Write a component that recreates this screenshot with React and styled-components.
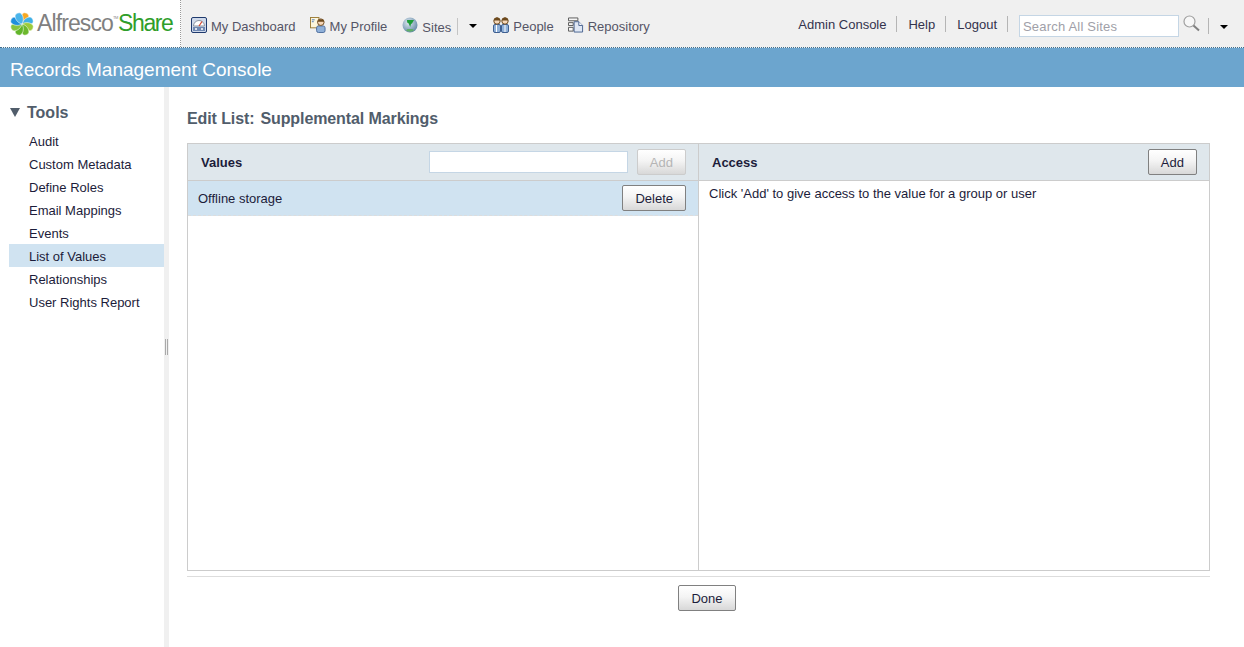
import styled, { createGlobalStyle } from "styled-components";

const GlobalStyle = createGlobalStyle`
  html, body {
    margin: 0;
    padding: 0;
    background: #fff;
    font-family: "Liberation Sans", Arial, sans-serif;
    font-size: 13px;
    color: #1c1c3a;
  }
`;

const tools = [
  "Audit",
  "Custom Metadata",
  "Define Roles",
  "Email Mappings",
  "Events",
  "List of Values",
  "Relationships",
  "User Rights Report",
];

const petals = [
  { a: 22, c: "#f7a823" },
  { a: 67, c: "#3fb0e6" },
  { a: 112, c: "#9ccb3b" },
  { a: 157, c: "#6cb82c" },
  { a: 202, c: "#62b52a" },
  { a: 247, c: "#86c440" },
  { a: 292, c: "#1f8fdc" },
  { a: 337, c: "#4ab4ea" },
];

function LogoIcon() {
  return (
    <svg width="26" height="26" viewBox="0 0 26 26">
      {petals.map((p) => (
        <path
          key={p.a}
          d="M13 13C9 10 8.500 5 10 2.500C11 .8 15 .8 16 2.500C17.500 5 17 10 13 13z"
          fill={p.c}
          stroke="#fff"
          strokeWidth="0.5"
          transform={`rotate(${p.a} 13 13)`}
        />
      ))}
    </svg>
  );
}

function DashboardIcon() {
  return (
    <svg width="16" height="16" viewBox="0 0 16 16">
      <rect x="0.500" y="0.500" width="15" height="15" rx="1.500" fill="#cfd9ea" stroke="#1f3a6e" />
      <path d="M2.500 9a5.500 5.500 0 0 1 11 0z" fill="#fff" stroke="#8a93a0" />
      <path d="M8 9l3-4.500" stroke="#d8452c" strokeWidth="1.200" />
      <rect x="2" y="10" width="12" height="4" fill="#6f88b2" />
      <circle cx="5" cy="12" r="1" fill="#fff" />
      <circle cx="11" cy="12" r="1" fill="#fff" />
    </svg>
  );
}

function ProfileIcon() {
  return (
    <svg width="16" height="16" viewBox="0 0 17 17">
      <rect x="0.500" y="0.500" width="9" height="11" fill="#fdf6dc" stroke="#9a7a35" />
      <path d="M2 3h3M2 5h2" stroke="#4a78b8" />
      <rect x="7" y="9.500" width="9" height="7" rx="2" fill="#8fb0d8" stroke="#4b6b9c" />
      <circle cx="11.500" cy="5.500" r="3.500" fill="#f6d7b8" stroke="#6d4a1e" />
      <path d="M8 5c.5-3.500 6.500-3.500 7 0z" fill="#6d4a1e" />
    </svg>
  );
}

function GlobeIcon() {
  return (
    <svg width="16" height="16" viewBox="0 0 16 16">
      <defs>
        <radialGradient id="globe" cx="0.4" cy="0.35" r="0.7">
          <stop offset="0" stopColor="#dfe9f0" />
          <stop offset="1" stopColor="#5f86a4" />
        </radialGradient>
      </defs>
      <circle cx="8" cy="8" r="7.500" fill="url(#globe)" />
      <path d="M5 3h7l-2 3.500-1 .5-.8 3-1.500-3.500-1.500-1z" fill="#1f9e3a" />
      <path d="M4 13.500c2 1.500 6 1.500 8 0l-1.500-1.500h-5z" fill="#5fae6a" />
    </svg>
  );
}

function PeopleIcon() {
  return (
    <svg width="16" height="16" viewBox="0 0 16 16">
      <rect x="0.500" y="7.500" width="7" height="8" rx="1.500" fill="#8fb0d8" stroke="#3f5f90" />
      <rect x="8.500" y="7.500" width="7" height="8" rx="1.500" fill="#8fb0d8" stroke="#3f5f90" />
      <path d="M3.500 8v7M12 8v7" stroke="#fff" />
      <circle cx="4" cy="4" r="3.200" fill="#f6d7b8" stroke="#6d4a1e" />
      <circle cx="12" cy="4" r="3.200" fill="#f6d7b8" stroke="#6d4a1e" />
      <path d="M.8 3.500c.5-4 6-4 6.500 0zM8.800 3.500c.5-4 6-4 6.500 0z" fill="#6d4a1e" />
    </svg>
  );
}

function RepositoryIcon() {
  return (
    <svg width="16" height="16" viewBox="0 0 17 16">
      <path d="M.5 .5h10v3H.5zM.5 5.500h5v3h-5zM.5 10.500h5v4h-5z" fill="#f6f6f6" stroke="#555" />
      <path d="M6.500 4.500h5l4 4v7h-9z" fill="#dfe7f4" stroke="#46618e" />
      <path d="M11.500 4.500v4h4" fill="#fff" stroke="#46618e" />
    </svg>
  );
}

function SearchIcon() {
  return (
    <svg width="17" height="17" viewBox="0 0 17 17">
      <circle cx="6.500" cy="6.500" r="5.500" fill="#f7f7f7" stroke="#a0a0a0" strokeWidth="1.200" />
      <path d="M10.500 10.500 16 15.500" stroke="#808080" strokeWidth="2" />
    </svg>
  );
}

export default function App() {
  return (
    <>
      <GlobalStyle />
      <Header>
        <Logo>
          <LogoIcon />
          <LogoWords>
            Alfresco<sup>TM</sup>
            <em>Share</em>
          </LogoWords>
        </Logo>
        <Toolbar>
          <Nav>
            <NavItem>
              <DashboardIcon />
              My Dashboard
            </NavItem>
            <NavItem>
              <ProfileIcon />
              My Profile
            </NavItem>
            <SitesItem>
              <GlobeIcon />
              <SitesLabel>Sites</SitesLabel>
              <SitesCaret />
            </SitesItem>
            <NavItem>
              <PeopleIcon />
              People
            </NavItem>
            <NavItem>
              <RepositoryIcon />
              Repository
            </NavItem>
          </Nav>
          <UserLinks>
            <UserLink>Admin Console</UserLink>
            <UserLink>Help</UserLink>
            <UserLink>Logout</UserLink>
          </UserLinks>
          <SearchBox placeholder="Search All Sites" readOnly />
          <SearchButton>
            <SearchIcon />
          </SearchButton>
          <SearchCaret>
            <Caret />
          </SearchCaret>
        </Toolbar>
      </Header>
      <TitleBar>Records Management Console</TitleBar>
      <Body>
        <Sidebar>
          <ToolsHeading>
            <DownTriangle />
            Tools
          </ToolsHeading>
          <ToolList>
            {tools.map((t) => (
              <ToolItem key={t} $active={t === "List of Values"}>
                {t}
              </ToolItem>
            ))}
          </ToolList>
        </Sidebar>
        <Resizer>
          <Grip />
        </Resizer>
        <Main>
          <PageTitle>
            Edit List:<span>Supplemental Markings</span>
          </PageTitle>
          <Panel>
            <Column>
              <ColumnHead>
                <HeadLabel>Values</HeadLabel>
                <ValueInput readOnly />
                <Button disabled>Add</Button>
              </ColumnHead>
              <ValueRow>
                Offline storage
                <Button>Delete</Button>
              </ValueRow>
            </Column>
            <Column>
              <ColumnHead>
                <HeadLabel>Access</HeadLabel>
                <Button>Add</Button>
              </ColumnHead>
              <Hint>Click 'Add' to give access to the value for a group or user</Hint>
            </Column>
          </Panel>
          <Footer>
            <DoneButton>Done</DoneButton>
          </Footer>
        </Main>
      </Body>
    </>
  );
}

const Header = styled.header`
  display: flex;
  height: 47px;
  background: #f0f0f0;
  border-bottom: 1px dotted #3f6f8f;
`;
const Logo = styled.div`
  display: flex;
  align-items: center;
  flex: none;
  box-sizing: border-box;
  width: 181px;
  padding: 0 0 0 9px;
  background: #fff;
  border-right: 1px dotted #999;
`;
const LogoWords = styled.div`
  margin-left: 2px;
  font-size: 23px;
  letter-spacing: -0.9px;
  color: #808080;
  white-space: nowrap;
  sup {
    font-size: 4px;
    letter-spacing: -0.3px;
    vertical-align: 12px;
    line-height: 0;
    color: #888;
  }
  em {
    font-style: normal;
    color: #2f9e2a;
    letter-spacing: -1.4px;
  }
`;
const Toolbar = styled.div`
  flex: 1;
  display: flex;
  align-items: center;
  padding-top: 5px;
`;
const Nav = styled.nav`
  display: flex;
  align-items: center;
  gap: 14px;
  margin-left: 10px;
`;
const NavItem = styled.div`
  display: flex;
  align-items: center;
  gap: 4px;
  font-size: 13px;
  color: #555566;
  white-space: nowrap;
  svg {
    margin-top: -3px;
  }
`;
const SitesItem = styled(NavItem)`
  margin-left: 1px;
`;
const SitesLabel = styled.span`
  padding: 2px 6px 0 0;
  border-right: 1px solid #c4c4c4;
  line-height: 15px;
`;
const Caret = styled.span`
  width: 0;
  height: 0;
  border-left: 4px solid transparent;
  border-right: 4px solid transparent;
  border-top: 4px solid #000;
`;
const SitesCaret = styled(Caret)`
  margin: 0 2px 0 7px;
`;
const UserLinks = styled.div`
  display: flex;
  align-items: center;
  margin: -4px 0 0 auto;
`;
const UserLink = styled.a`
  height: 16px;
  font-size: 13px;
  line-height: 18px;
  padding: 0 10px 0 11px;
  color: #33334d;
  border-right: 1px solid #b5b5b5;
`;
const SearchBox = styled.input`
  box-sizing: border-box;
  width: 160px;
  height: 22px;
  margin-left: 11px;
  padding: 0 3px;
  border: 1px solid #c5d6e5;
  background: #fff;
  font: 13px "Liberation Sans", Arial, sans-serif;
  letter-spacing: 0.2px;
  outline: none;
  &::placeholder {
    color: #a0a0a8;
    opacity: 1;
  }
`;
const SearchButton = styled.div`
  display: flex;
  margin: -5px 0 0 4px;
`;
const SearchCaret = styled.div`
  display: flex;
  align-items: center;
  flex: none;
  box-sizing: border-box;
  width: 20px;
  height: 16px;
  margin: 0 16px 0 8px;
  padding: 2px 0 0 11px;
  border-left: 1px solid #b5b5b5;
`;
const TitleBar = styled.div`
  box-sizing: border-box;
  height: 39px;
  padding-left: 10px;
  background: #6ca5ce;
  color: #fff;
  font-size: 19px;
  line-height: 43px;
`;
const Body = styled.div`
  display: flex;
  height: 560px;
`;
const Sidebar = styled.aside`
  flex: none;
  box-sizing: border-box;
  width: 164px;
  padding: 16px 0 0 9px;
`;
const ToolsHeading = styled.h3`
  display: flex;
  align-items: center;
  gap: 7px;
  margin: 0 0 7px;
  padding-left: 1px;
  font-size: 16px;
  line-height: 19px;
  color: #515d6b;
`;
const DownTriangle = styled.span`
  width: 0;
  height: 0;
  border-left: 5px solid transparent;
  border-right: 5px solid transparent;
  border-top: 9px solid #515d6b;
`;
const ToolList = styled.ul`
  list-style: none;
  margin: 0;
  padding: 0;
`;
const ToolItem = styled.li`
  height: 23px;
  padding-left: 20px;
  font-size: 13px;
  line-height: 25px;
  color: #1c1c3a;
  background: ${(p) => (p.$active ? "#d0e3f1" : "transparent")};
`;
const Resizer = styled.div`
  flex: none;
  display: flex;
  align-items: flex-start;
  justify-content: center;
  width: 5px;
  background: #f0f0f0;
`;
const Grip = styled.div`
  box-sizing: border-box;
  width: 3px;
  height: 16px;
  margin-top: 252px;
  border-left: 1px solid #aaa;
  border-right: 1px solid #aaa;
`;
const Main = styled.main`
  flex: none;
  width: 1041px;
  padding: 23px 0 0 18px;
  box-sizing: border-box;
`;
const PageTitle = styled.h1`
  margin: 0 0 16px;
  font-size: 16px;
  line-height: 17px;
  font-weight: bold;
  color: #515d6b;
  letter-spacing: -0.1px;
  span {
    margin-left: 6px;
  }
`;
const Panel = styled.div`
  display: grid;
  grid-template-columns: 510px 1fr;
  box-sizing: border-box;
  width: 1023px;
  height: 428px;
  border: 1px solid #ccc;
`;
const Column = styled.section`
  & + & {
    border-left: 1px solid #ccc;
  }
`;
const ColumnHead = styled.div`
  display: flex;
  align-items: center;
  box-sizing: border-box;
  height: 37px;
  padding: 0 12px 0 13px;
  background: #dfe7ec;
  border-bottom: 1px solid #ccc;
`;
const HeadLabel = styled.div`
  flex: 1;
  font-size: 13px;
  font-weight: bold;
  color: #1c1c3a;
`;
const ValueInput = styled.input`
  box-sizing: border-box;
  width: 199px;
  height: 22px;
  margin-right: 9px;
  border: 1px solid #c5d6e5;
  background: #fff;
  outline: none;
`;
const Button = styled.button`
  box-sizing: border-box;
  height: 26px;
  min-width: 49px;
  padding: 0 12px;
  border: 1px solid ${(p) => (p.disabled ? "#ccc" : "#808080")};
  border-radius: 2px;
  background: linear-gradient(#fff, #f4f4f4 45%, #d8d8d8);
  color: ${(p) => (p.disabled ? "#b5b5b5" : "#1c1c3a")};
  font: 13px "Liberation Sans", Arial, sans-serif;
`;
const ValueRow = styled.div`
  display: flex;
  align-items: center;
  justify-content: space-between;
  box-sizing: border-box;
  height: 35px;
  padding: 0 12px 0 10px;
  background: #d0e3f1;
  border-bottom: 1px dashed #ddd;
  font-size: 13px;
  color: #1c1c3a;
`;
const Hint = styled.div`
  padding: 5px 10px;
  font-size: 13px;
  line-height: 16px;
  color: #1c1c3a;
`;
const Footer = styled.div`
  display: flex;
  justify-content: center;
  box-sizing: border-box;
  width: 1023px;
  margin-top: 5px;
  padding: 8px 0 0 17px;
  border-top: 1px solid #ddd;
`;
const DoneButton = styled(Button)`
  width: 58px;
  padding: 0;
`;
